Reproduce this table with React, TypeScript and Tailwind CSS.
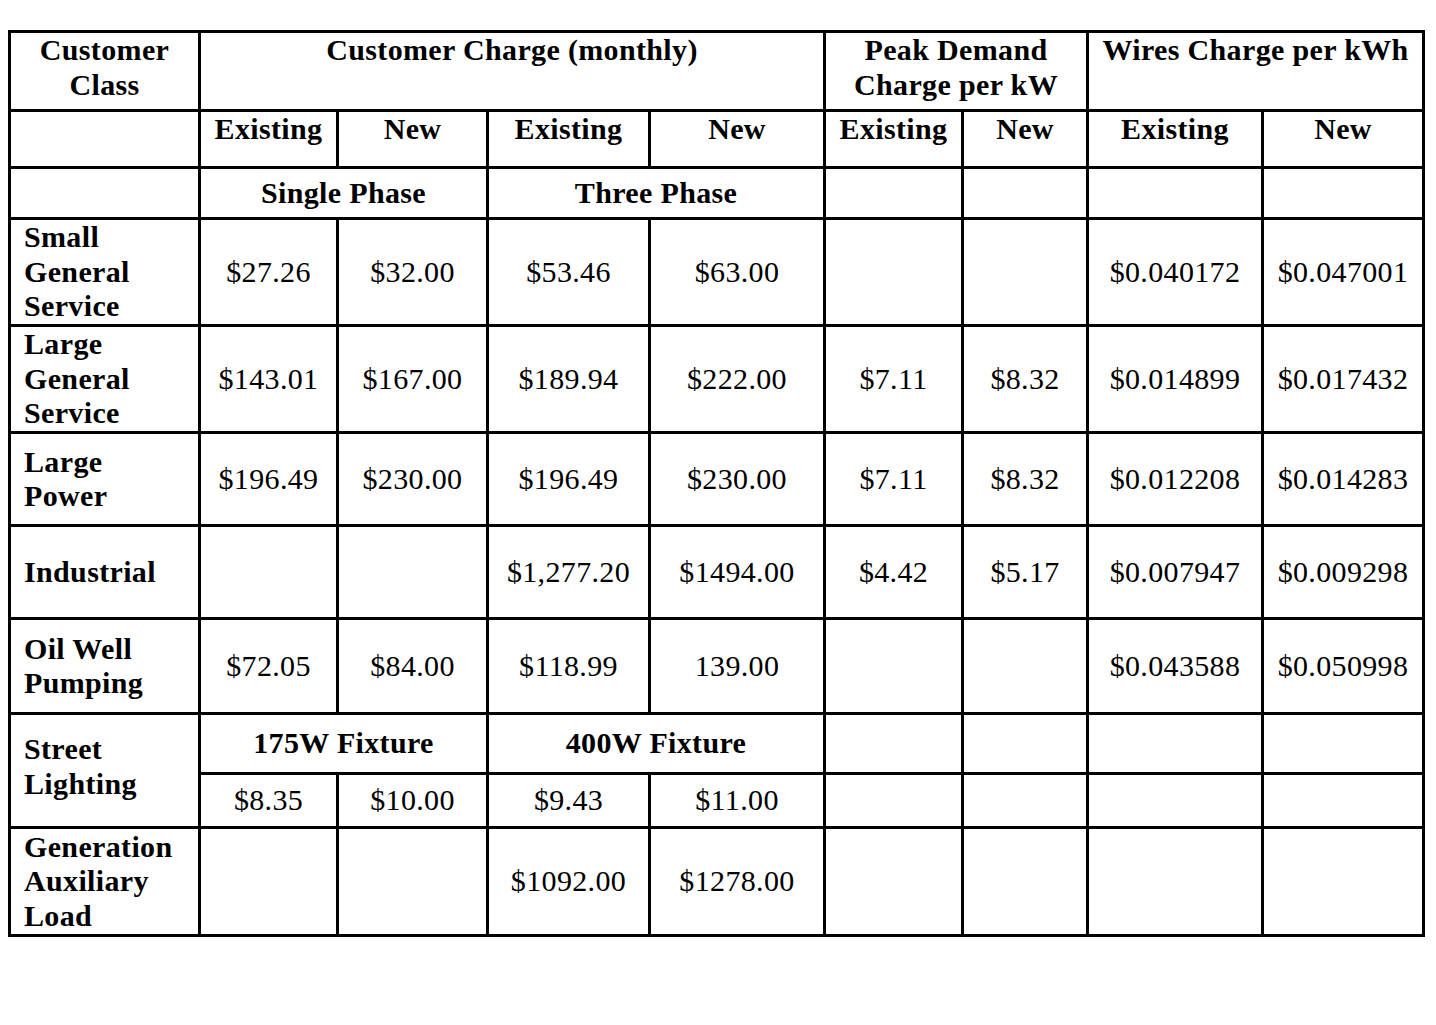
import React from "react";

type Cell = {
  text?: string;
  col: string;
  kind?: "head" | "label" | "value" | "center" | "labelUp";
};

const cols =
  "grid-cols-[187px_135px_147px_159px_172px_135px_122px_172px_158px]";
const rows =
  "grid-rows-[76px_54px_48px_104px_104px_90px_90px_92px_57px_51px_105px]";

const colStart = [
  "col-start-1",
  "col-start-2",
  "col-start-3",
  "col-start-4",
  "col-start-5",
  "col-start-6",
  "col-start-7",
  "col-start-8",
  "col-start-9",
];

function line(values: (string | undefined)[], label?: string): Cell[] {
  const out: Cell[] = [];
  if (label !== undefined) out.push({ text: label, col: "col-start-1", kind: "label" });
  values.forEach((v, i) => {
    out.push({ text: v, col: colStart[i + 1], kind: "value" });
  });
  return out;
}

const data: Cell[][] = [
  [
    { text: "Customer\nClass", col: "col-start-1", kind: "head" },
    { text: "Customer Charge (monthly)", col: "col-start-2 col-span-4", kind: "head" },
    { text: "Peak Demand\nCharge per kW", col: "col-start-6 col-span-2", kind: "head" },
    { text: "Wires Charge per kWh", col: "col-start-8 col-span-2", kind: "head" },
  ],
  [
    { col: "col-start-1" },
    ...["Existing", "New", "Existing", "New", "Existing", "New", "Existing", "New"].map(
      (t, i): Cell => ({ text: t, col: colStart[i + 1], kind: "head" })
    ),
  ],
  [
    { col: "col-start-1" },
    { text: "Single Phase", col: "col-start-2 col-span-2", kind: "center" },
    { text: "Three Phase", col: "col-start-4 col-span-2", kind: "center" },
    { col: "col-start-6" },
    { col: "col-start-7" },
    { col: "col-start-8" },
    { col: "col-start-9" },
  ],
  line(
    ["$27.26", "$32.00", "$53.46", "$63.00", "", "", "$0.040172", "$0.047001"],
    "Small\nGeneral\nService"
  ),
  line(
    ["$143.01", "$167.00", "$189.94", "$222.00", "$7.11", "$8.32", "$0.014899", "$0.017432"],
    "Large\nGeneral\nService"
  ),
  line(
    ["$196.49", "$230.00", "$196.49", "$230.00", "$7.11", "$8.32", "$0.012208", "$0.014283"],
    "Large\nPower"
  ),
  line(
    ["", "", "$1,277.20", "$1494.00", "$4.42", "$5.17", "$0.007947", "$0.009298"],
    "Industrial"
  ),
  line(
    ["$72.05", "$84.00", "$118.99", "139.00", "", "", "$0.043588", "$0.050998"],
    "Oil Well\nPumping"
  ),
  [
    { text: "Street\nLighting", col: "col-start-1 row-span-2", kind: "labelUp" },
    { text: "175W Fixture", col: "col-start-2 col-span-2", kind: "center" },
    { text: "400W Fixture", col: "col-start-4 col-span-2", kind: "center" },
    { col: "col-start-6" },
    { col: "col-start-7" },
    { col: "col-start-8" },
    { col: "col-start-9" },
  ],
  line(["$8.35", "$10.00", "$9.43", "$11.00", "", "", "", ""]),
  line(["", "", "$1092.00", "$1278.00", "", "", "", ""], "Generation\nAuxiliary\nLoad"),
];

const rowStart = [
  "row-start-1",
  "row-start-2",
  "row-start-3",
  "row-start-4",
  "row-start-5",
  "row-start-6",
  "row-start-7",
  "row-start-8",
  "row-start-9",
  "row-start-10",
  "row-start-11",
];

function cellClass(c: Cell) {
  switch (c.kind) {
    case "head":
      return "flex items-start justify-center text-center font-bold px-1";
    case "label":
      return "flex items-center justify-start text-left font-bold pl-[13px]";
    case "labelUp":
      return "flex items-center justify-start text-left font-bold pl-[13px] pb-[8px]";
    case "center":
      return "flex items-center justify-center text-center font-bold";
    default:
      return "flex items-center justify-center text-center";
  }
}

export default function App() {
  return (
    <div className="w-[1436px] h-[1025px] bg-white pt-[30px] pl-[8px] font-['Liberation_Serif',serif] text-[30px] leading-[34.5px] tracking-[0.35px] text-black">
      <div className={`grid ${cols} ${rows} gap-[3px] bg-black p-[3px] w-fit`}>
        {data.map((r, ri) =>
          r.map((c, ci) => (
            <div
              key={`${ri}-${ci}`}
              className={`${c.col} ${rowStart[ri]} bg-white whitespace-pre-line ${cellClass(c)}`}
            >
              {c.text ? <span>{c.text}</span> : null}
            </div>
          ))
        )}
      </div>
    </div>
  );
}
